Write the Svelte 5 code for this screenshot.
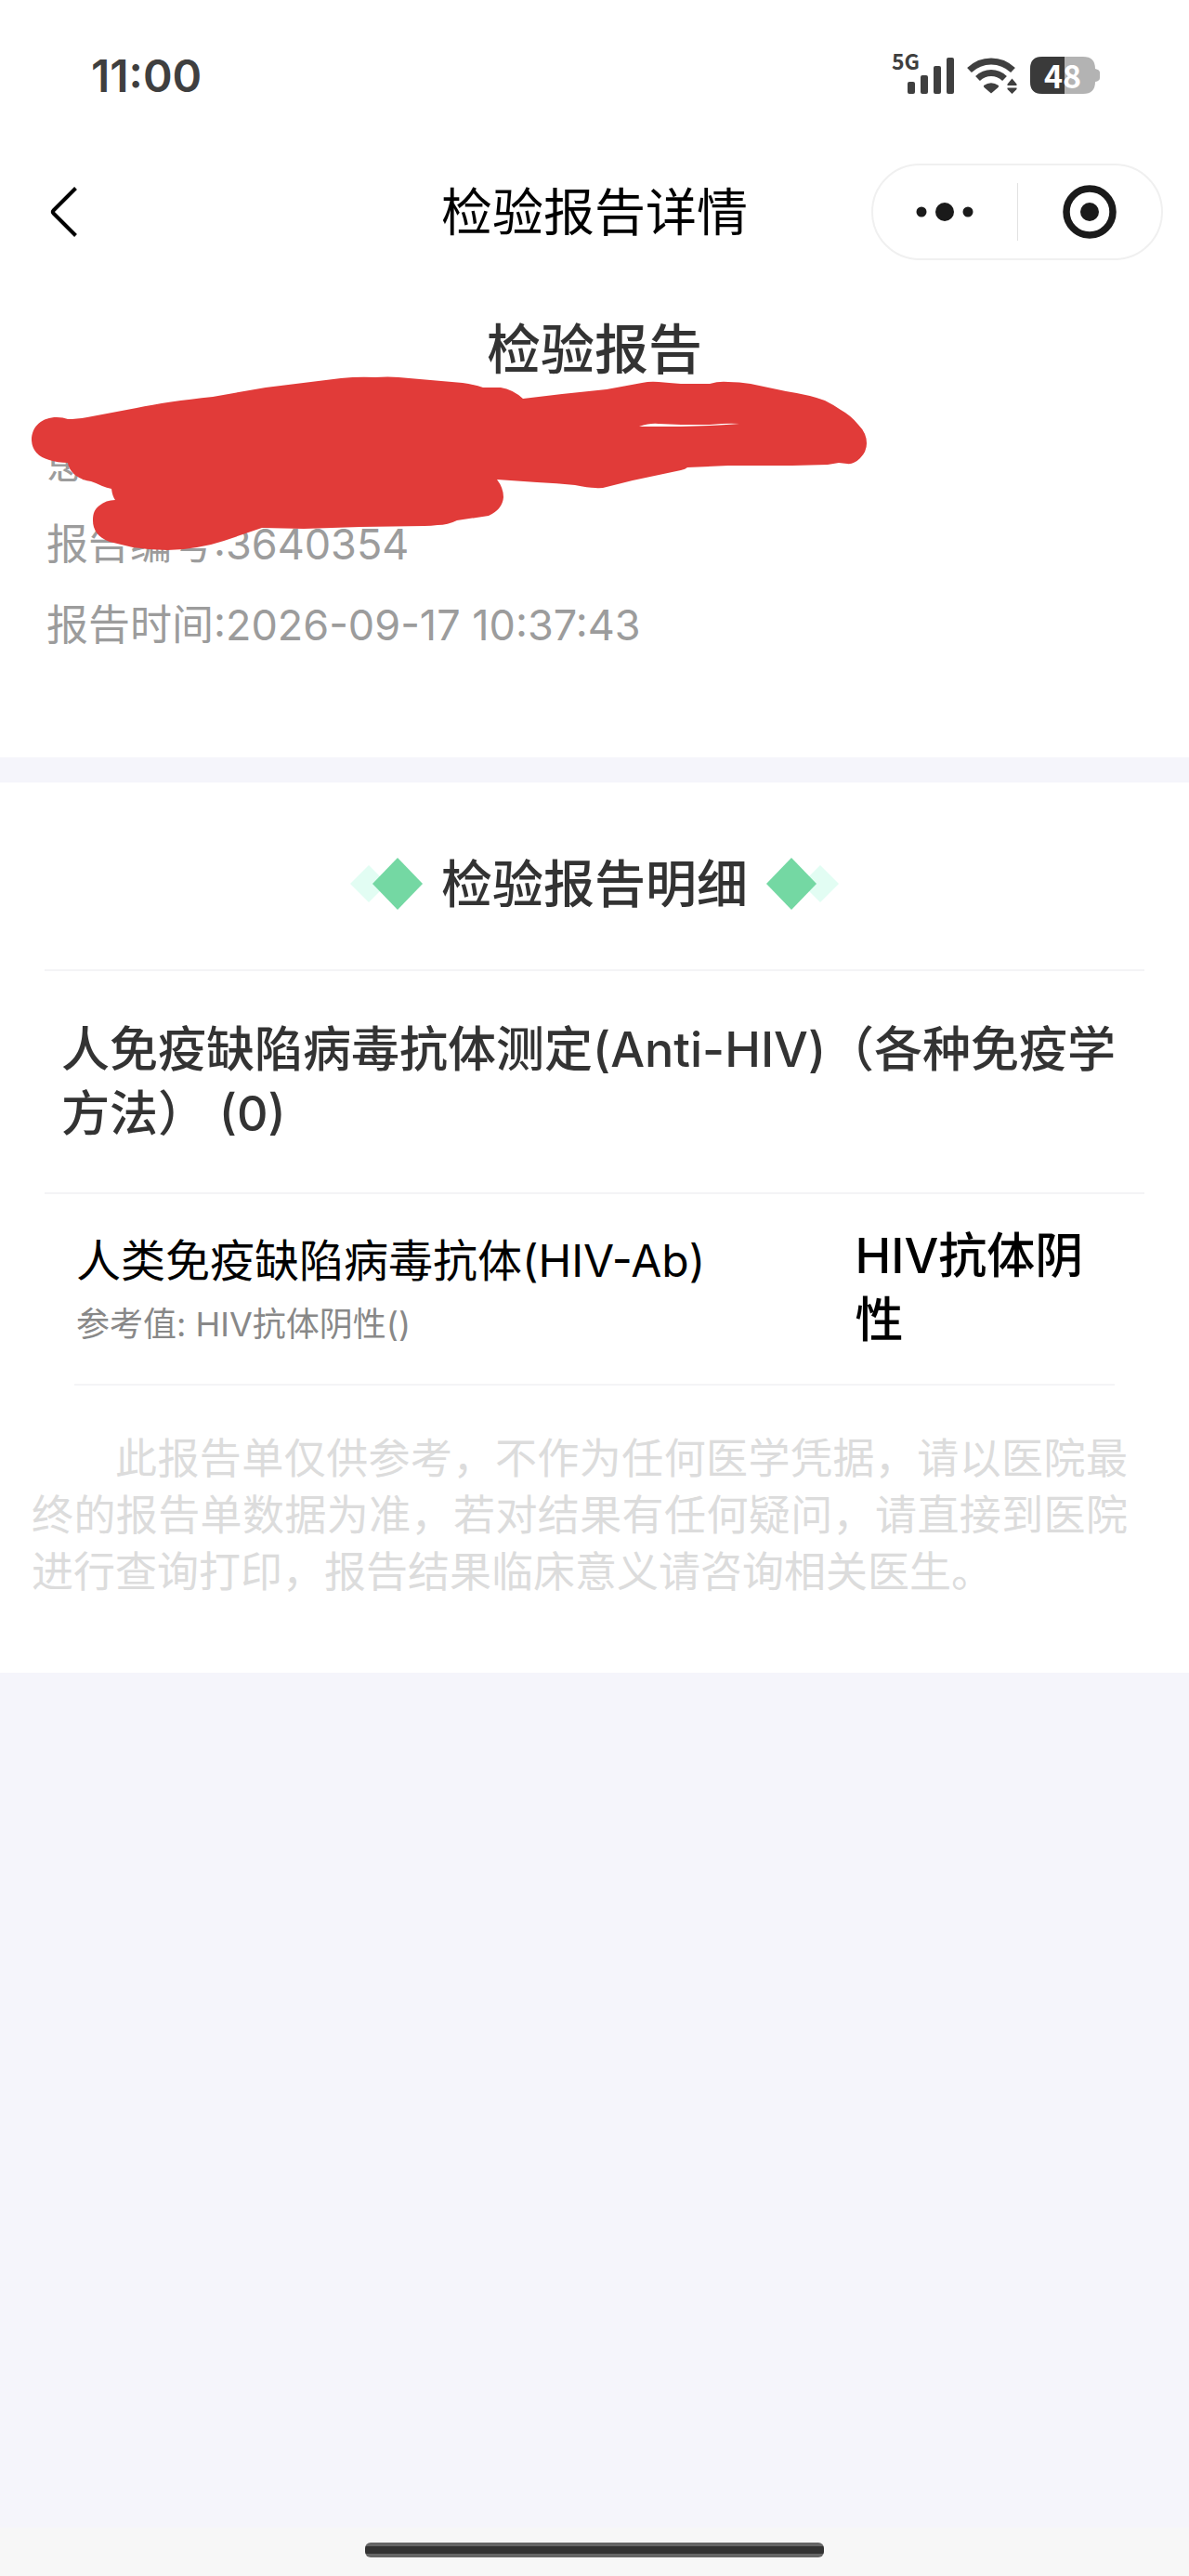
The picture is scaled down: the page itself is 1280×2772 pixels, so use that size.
<script lang="ts">
    const time = '11:00';
    const battery = 48;
    const batteryWidth = 75;

    const report = {
        patient: '',
        number: '3640354',
        time: '2026-09-17 10:37:43',
    };

    const groups = [
        {
            name: '人免疫缺陷病毒抗体测定(Anti-HIV)（各种免疫学方法） (0)',
            items: [
                { name: '人类免疫缺陷病毒抗体(HIV-Ab)', reference: 'HIV抗体阴性()', value: 'HIV抗体阴性' },
            ],
        },
    ];
</script>

<div class="page">
    <div class="status">
        <span class="clock">{time}</span>
        <div class="indicators">
            <div class="signal">
                <span>5G</span>
                <svg width="50" height="40" viewBox="0 0 50 40" fill="#3f3f3f">
                    <rect x="0" y="27" width="8" height="13" rx="2" />
                    <rect x="14" y="20" width="8" height="20" rx="2" />
                    <rect x="28" y="10" width="8" height="30" rx="2" />
                    <rect x="42" y="1" width="8" height="39" rx="2" />
                </svg>
            </div>
            <svg width="54" height="40" viewBox="0 0 54 40">
                <g fill="none" stroke="#3f3f3f" stroke-width="7">
                    <path d="M2.500 14.500C16 1.800 36 1.800 49.500 14.500" />
                    <path d="M11.500 23.500C20 15.500 32 15.500 40.500 23.500" />
                </g>
                <path d="M18 31Q26 25.500 34 31Q34.600 32 33 33.500L26 39.500L19 33.500Q17.400 32 18 31Z" fill="#3f3f3f" />
                <path d="M48 21L55 30.500V33H42V30.500Z M42 34.500H55V36L48 42L42 36Z" fill="#fff" />
                <path d="M48.500 23.500L53.500 29.500V31H43.500V29.500Z M43.500 33.500H53.500V35L48.500 40L43.500 35Z" fill="#3f3f3f" />
            </svg>
            <div class="battery">
                <svg width={batteryWidth} height="40" viewBox="0 0 75 40">
                    <clipPath id="shell">
                        <path d="M13 0H57Q70 0 70 13Q75 14 75 17V23Q75 26 70 27Q70 40 57 40H13Q0 40 0 27V13Q0 0 13 0Z" />
                    </clipPath>
                    <g clip-path="url(#shell)">
                        <rect width="75" height="40" fill="#b3b3b3" />
                        <rect width={(batteryWidth * battery) / 100 + 1} height="40" fill="#3a3a3a" />
                    </g>
                </svg>
                <span>{battery}</span>
            </div>
        </div>
    </div>

    <nav>
        <button class="back" aria-label="返回">
            <svg width="32" height="56" viewBox="0 0 32 56">
                <path d="M28.500 2.500L4.500 26.500Q3 28 4.500 29.500L28.500 53.500" fill="none" stroke="#000" stroke-width="4" />
            </svg>
        </button>
        <span class="title">检验报告详情</span>
        <div class="capsule">
            <button aria-label="更多">
                <svg width="62" height="20" viewBox="0 0 62 20" fill="#1a1a1a">
                    <circle cx="6" cy="10" r="5.500" />
                    <circle cx="31" cy="10" r="10" />
                    <circle cx="56" cy="10" r="5.500" />
                </svg>
            </button>
            <span class="split"></span>
            <button aria-label="关闭">
                <svg width="58" height="58" viewBox="0 0 58 58">
                    <circle cx="29" cy="29" r="25" fill="none" stroke="#1a1a1a" stroke-width="7.500" />
                    <circle cx="29" cy="29" r="10" fill="#1a1a1a" />
                </svg>
            </button>
        </div>
    </nav>

    <header>
        <h1>检验报告</h1>
        <p>患者姓名:{report.patient}</p>
        <p>报告编号:{report.number}</p>
        <p>报告时间:{report.time}</p>
        <svg class="scribble" width="900" height="188" viewBox="34 405 900 188">
            <path
                d="M34 474C34 458 46 449 61 449Q68 449 73 451Q82 451 94 449L147 439Q180 432 229 427L286 417L367 407Q386 405 404 406Q418 405 429 406L498 412Q512 414 520 417H539Q552 419 563 429L605 424L653 419L691 412Q700 410 709 411Q720 412 733 413H764Q774 410 784 411Q796 411 808 413L846 421Q872 425 888 431Q898 436 905 441Q916 447 924 457Q933 466 933 477Q933 486 926 493Q919 500 912 499L903 498L891 500L853 501H784L740 503Q738 505 733 506L681 517L653 524Q647 526 641 525Q633 525 619 522Q600 520 578 519L535 516Q542 525 542 535Q541 548 526 555L492 560Q482 565 471 565Q464 566 457 566L388 567L327 569L282 568L241 582Q226 587 212 589Q196 592 180 592Q162 592 143 589L118 583C105 578 100 570 100 560C100 552 102 548 107 544Q114 538 124 538Q121 534 120 526Q115 525 110 523Q104 520 98 518Q89 517 82 512Q74 506 73 498Q62 498 53 495Q35 490 34 474Z"
                fill="#e13b39"
            />
            <path d="M688 459Q700 455 709 456L733 457H764Q784 455 796 456Q784 457 764 458L733 459Z" fill="#fff" />
        </svg>
    </header>

    <main>
        <h2>
            <svg width="78" height="58" viewBox="0 0 78 58">
                <path d="M20 9L40 29L20 49L0 29Z" fill="#e2fdf3" />
                <path d="M51 1L78 29L51 57L24 29Z" fill="#74d8a3" />
            </svg>
            <span>检验报告明细</span>
            <svg width="78" height="58" viewBox="0 0 78 58">
                <path d="M58 9L78 29L58 49L38 29Z" fill="#e2fdf3" />
                <path d="M27 1L54 29L27 57L0 29Z" fill="#74d8a3" />
            </svg>
        </h2>

        {#each groups as group}
            <section>
                <h3>{group.name}</h3>
                {#each group.items as item}
                    <div class="item">
                        <div class="name">
                            {item.name}
                            <small>参考值: {item.reference}</small>
                        </div>
                        <strong>{item.value}</strong>
                    </div>
                {/each}
            </section>
        {/each}

        <p class="notice">
            此报告单仅供参考，不作为任何医学凭据，请以医院最终的报告单数据为准，若对结果有任何疑问，请直接到医院进行查询打印，报告结果临床意义请咨询相关医生。
        </p>
    </main>

    <footer><span class="handle"></span></footer>
</div>

<style>
    :global(body) {
        margin: 0;
        background: #f5f5fb;
    }

    .page {
        display: flex;
        flex-direction: column;
        min-height: 100vh;
        background: #f5f5fb;
        color: #333;
        font-family: Inter, "Noto Sans CJK SC", sans-serif;
    }

    h1, h2, h3, p {
        margin: 0;
        font-weight: 500;
    }

    button {
        display: flex;
        align-items: center;
        justify-content: center;
        padding: 0;
        border: 0;
        background: none;
    }

    svg {
        display: block;
        flex: none;
    }

    .status {
        display: flex;
        align-items: center;
        justify-content: space-between;
        height: 162px;
        padding: 0 96px 2px 98px;
        background: #fff;
    }

    .clock {
        color: #3f3f3f;
        font-size: 48px;
        font-weight: 600;
    }

    .indicators {
        display: flex;
        align-items: center;
        gap: 14px;
    }

    .signal {
        position: relative;
        padding-left: 17px;
    }

    .signal span {
        position: absolute;
        bottom: 20px;
        left: 0;
        color: #3f3f3f;
        font: 700 23px/32px "Noto Sans CJK SC", sans-serif;
    }

    .battery {
        position: relative;
    }

    .battery span {
        position: absolute;
        inset: 0 5px 0 0;
        color: #fff;
        font: 700 34px/40px "Noto Sans CJK SC", sans-serif;
        text-align: center;
    }

    nav {
        display: grid;
        grid-template-columns: 1fr auto 1fr;
        align-items: center;
        height: 128px;
        padding: 0 28px;
        background: #fff;
        color: #000;
    }

    .back {
        justify-self: start;
        padding: 0 25px;
    }

    .title {
        font-size: 55px;
        line-height: 84px;
    }

    .capsule {
        display: flex;
        align-items: center;
        justify-self: end;
        box-sizing: border-box;
        width: 314px;
        height: 104px;
        border: 2px solid #f0f0f0;
        border-radius: 52px;
    }

    .capsule button {
        flex: 1;
        height: 100%;
    }

    .split {
        width: 1px;
        height: 62px;
        background: #e2e2e2;
    }

    header {
        position: relative;
        padding: 42px 50px 99px;
        background: #fff;
    }

    h1 {
        margin-bottom: 37px;
        font-size: 58px;
        line-height: 84px;
        text-align: center;
    }

    header p {
        color: #9c9c9c;
        font-size: 45px;
        font-weight: 400;
        line-height: 87px;
    }

    .scribble {
        position: absolute;
        top: 113px;
        left: 34px;
    }

    main {
        margin-top: 27px;
        padding-bottom: 78px;
        background: #fff;
    }

    h2 {
        display: flex;
        align-items: center;
        justify-content: center;
        gap: 20px;
        margin: 0 48px;
        padding: 67px 0 50px;
        border-bottom: 2px solid #f4f4f6;
        font-size: 55px;
        line-height: 84px;
    }

    h3 {
        margin: 0 48px;
        padding: 50px 18px;
        border-bottom: 2px solid #f4f4f6;
        font-size: 52px;
        line-height: 69px;
    }

    .item {
        display: flex;
        margin: 0 80px;
        padding: 32px 0 30px;
        border-bottom: 2px solid #f4f4f6;
        color: #000;
    }

    .name {
        flex: 3;
        padding: 6px 0 0 2px;
        font-size: 48px;
        line-height: 68px;
    }

    small {
        display: block;
        color: #888;
        font-size: 36px;
    }

    strong {
        flex: 1;
        font-size: 52px;
        font-weight: 500;
        line-height: 69px;
    }

    .notice {
        margin-top: 48px;
        padding: 0 66px 0 34px;
        color: #dcdcdc;
        font-size: 45px;
        font-weight: 400;
        line-height: 61px;
        text-align: justify;
        text-indent: 2em;
    }

    footer {
        display: flex;
        justify-content: center;
        height: 36px;
        margin-top: auto;
        padding-top: 16px;
        background: #f7f7f7;
    }

    .handle {
        width: 494px;
        height: 16px;
        border-radius: 6px;
        background: linear-gradient(#666 4px, #333 4px, #333 12px, #666 12px);
    }
</style>
